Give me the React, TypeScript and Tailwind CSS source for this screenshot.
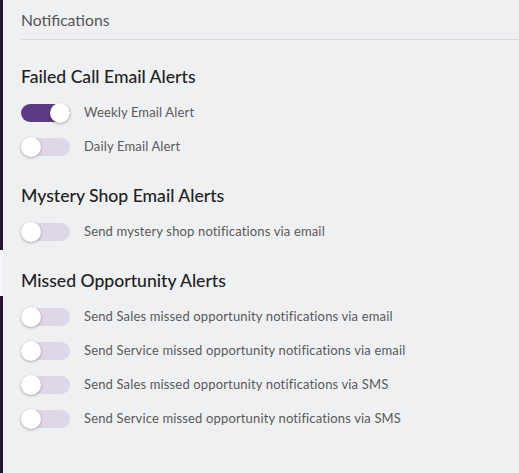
import React from "react";

type Item = { label: string; on?: boolean };

const sections: { title: string; items: Item[] }[] = [
  {
    title: "Failed Call Email Alerts",
    items: [{ label: "Weekly Email Alert", on: true }, { label: "Daily Email Alert" }],
  },
  {
    title: "Mystery Shop Email Alerts",
    items: [{ label: "Send mystery shop notifications via email" }],
  },
  {
    title: "Missed Opportunity Alerts",
    items: [
      { label: "Send Sales missed opportunity notifications via email" },
      { label: "Send Service missed opportunity notifications via email" },
      { label: "Send Sales missed opportunity notifications via SMS" },
      { label: "Send Service missed opportunity notifications via SMS" },
    ],
  },
];

function Toggle({ on }: { on?: boolean }) {
  return (
    <div
      className={`relative h-[18px] w-[49px] shrink-0 rounded-full ${
        on ? "bg-[#5d3a86]" : "bg-[#ddd7e7]"
      }`}
    >
      <div
        className={`absolute top-1/2 h-[20px] w-[20px] -translate-y-1/2 rounded-full bg-white shadow-[0_1px_3px_rgba(0,0,0,0.3)] ${
          on ? "right-0" : "left-0"
        }`}
      />
    </div>
  );
}

export default function App() {
  return (
    <div className="flex min-h-[473px] w-[519px] bg-[#eff0f2] font-['Lato','Noto_Sans',sans-serif]">
      <div className="flex w-[3px] flex-col">
        <div className="h-[250px] bg-[#22142f]" />
        <div className="h-[46px] bg-[#f6f3fa]" />
        <div className="flex-1 bg-[#22142f]" />
      </div>
      <div className="flex-1 pl-[18px]">
        <div className="flex h-10 items-center border-b border-[#dbd8e8] pt-[3px] text-[15.7px] text-[#555]">
          Notifications
        </div>
        {sections.map((s, i) => (
          <div key={s.title} className={i === 0 ? "mt-[25px]" : "mt-[20px]"}>
            <h2 className="h-6 text-[17.6px] leading-6 font-medium text-[#222]">
              {s.title}
            </h2>
            <div className="mt-[7px]">
              {s.items.map((it) => (
                <div key={it.label} className="flex h-[34px] items-center gap-[14px]">
                  <Toggle on={it.on} />
                  <span className="text-[13px] tracking-[0.15px] text-[#5a5a5a]">{it.label}</span>
                </div>
              ))}
            </div>
          </div>
        ))}
      </div>
    </div>
  );
}
